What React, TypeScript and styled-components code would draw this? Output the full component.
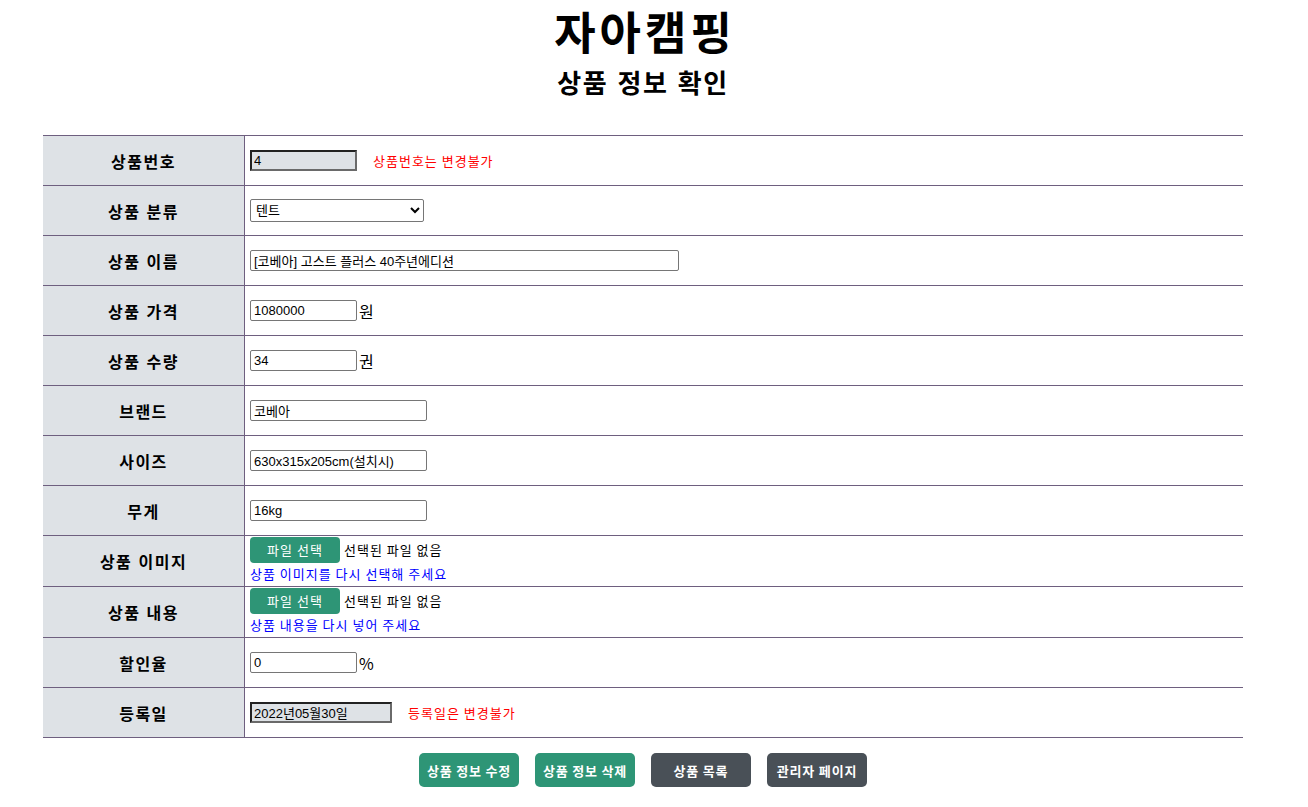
import React from "react";
import styled, { createGlobalStyle } from "styled-components";

const GlobalStyle = createGlobalStyle`
  html, body { margin: 0; padding: 0; background: #fff; }
  body { font-family: "Liberation Sans", "Noto Sans CJK KR", sans-serif; color: #000; }
`;

const Page = styled.div`
  width: 1286px;
  display: flex;
  flex-direction: column;
  align-items: center;
`;

const Title = styled.h1`
  margin: 0;
  font-size: 45px;
  font-weight: 700;
  line-height: 62px;
  height: 58px;
  letter-spacing: 4px;
  padding-left: 4px;
  font-family: "Noto Sans CJK KR", sans-serif;
`;

const SubTitle = styled.h2`
  margin: 4px 0 0;
  font-size: 26px;
  font-weight: 700;
  line-height: 40px;
  letter-spacing: 1.5px;
  word-spacing: 2px;
  font-family: "Noto Sans CJK KR", sans-serif;
`;

const Table = styled.table`
  margin-top: 33px;
  width: 1200px;
  border-collapse: collapse;
`;

const Row = styled.tr<{ $h?: number }>`
  height: ${(p) => p.$h ?? 50}px;
  border-top: 1px solid #6e5f7f;
  border-bottom: 1px solid #6e5f7f;
`;

const Th = styled.th`
  width: 201px;
  background: #dee2e6;
  border-right: 1px solid #6e5f7f;
  font-size: 16px;
  font-weight: 700;
  letter-spacing: 1.5px;
  word-spacing: 1px;
  text-align: center;
  padding: 0;
  font-family: "Noto Sans CJK KR", sans-serif;
`;

const Td = styled.td`
  padding: 0 5px;
  font-size: 13px;
  vertical-align: middle;
`;

const Line = styled.div`
  display: flex;
  align-items: center;
`;

const Input = styled.input<{ $w: number }>`
  width: ${(p) => p.$w}px;
  height: 21px;
  box-sizing: border-box;
  border: 1px solid #767676;
  border-radius: 2px;
  padding: 1px 3px;
  font-family: "Liberation Sans", "Noto Sans CJK KR", sans-serif;
  font-size: 13px;
  color: #000;
  background: #fff;
  outline: none;
`;

const ReadOnly = styled.input<{ $w: number }>`
  width: ${(p) => p.$w}px;
  height: 21px;
  box-sizing: border-box;
  border: 2px solid #6a6a6a;
  border-top-color: #222;
  border-left-color: #222;
  padding: 1px 2px;
  font-family: "Liberation Sans", "Noto Sans CJK KR", sans-serif;
  font-size: 13px;
  color: #000;
  background: #dee2e6;
  outline: none;
`;

const Select = styled.select`
  width: 174px;
  height: 23px;
  border: 1px solid #767676;
  border-radius: 2px;
  font-family: "Liberation Sans", "Noto Sans CJK KR", sans-serif;
  font-size: 13px;
  padding: 0 1px;
  background: #fff;
  color: #000;
`;

const Unit = styled.span`
  margin-left: 2px;
  font-size: 16px;
  font-family: "Noto Sans CJK KR", sans-serif;
`;

const Warn = styled.span`
  margin-left: 16px;
  color: #ff0000;
  font-size: 13px;
  letter-spacing: 1px;
  font-family: "Noto Sans CJK KR", sans-serif;
`;

const FileButton = styled.span`
  display: inline-flex;
  align-items: center;
  justify-content: center;
  width: 90px;
  height: 26px;
  border-radius: 4px;
  background: #2e9576;
  color: #fff;
  font-size: 13px;
  letter-spacing: 1px;
  font-family: "Noto Sans CJK KR", sans-serif;
`;

const FileText = styled.span`
  margin-left: 4px;
  font-size: 13px;
  letter-spacing: 1px;
  font-family: "Noto Sans CJK KR", sans-serif;
`;

const Hint = styled.div`
  color: #0000ff;
  font-size: 13px;
  line-height: 20px;
  margin-top: 1px;
  letter-spacing: 1px;
  font-family: "Noto Sans CJK KR", sans-serif;
`;

const FileCell = styled.div`
  display: flex;
  flex-direction: column;
  margin-top: -2px;
`;

const Buttons = styled.div`
  display: flex;
  gap: 16px;
  margin-top: 15px;
`;

const Btn = styled.button<{ $dark?: boolean }>`
  width: 100px;
  height: 34px;
  border: none;
  border-radius: 5px;
  background: ${(p) => (p.$dark ? "#495057" : "#2e9576")};
  color: #fff;
  font-size: 13px;
  font-weight: 700;
  letter-spacing: 0.8px;
  font-family: "Noto Sans CJK KR", sans-serif;
  padding: 0;
`;

const FileRow = ({ label, hint }: { label: string; hint: string }) => (
  <Row $h={51}>
    <Th>{label}</Th>
    <Td>
      <FileCell>
        <Line>
          <FileButton>파일 선택</FileButton>
          <FileText>선택된 파일 없음</FileText>
        </Line>
        <Hint>{hint}</Hint>
      </FileCell>
    </Td>
  </Row>
);

export default function App() {
  return (
    <Page>
      <GlobalStyle />
      <Title>자아캠핑</Title>
      <SubTitle>상품 정보 확인</SubTitle>
      <Table>
        <tbody>
          <Row>
            <Th>상품번호</Th>
            <Td>
              <Line>
                <ReadOnly $w={107} readOnly defaultValue="4" />
                <Warn>상품번호는 변경불가</Warn>
              </Line>
            </Td>
          </Row>
          <Row>
            <Th>상품 분류</Th>
            <Td>
              <Select defaultValue="텐트">
                <option>텐트</option>
              </Select>
            </Td>
          </Row>
          <Row>
            <Th>상품 이름</Th>
            <Td>
              <Input $w={429} defaultValue="[코베아] 고스트 플러스 40주년에디션" />
            </Td>
          </Row>
          <Row>
            <Th>상품 가격</Th>
            <Td>
              <Line>
                <Input $w={107} defaultValue="1080000" />
                <Unit>원</Unit>
              </Line>
            </Td>
          </Row>
          <Row>
            <Th>상품 수량</Th>
            <Td>
              <Line>
                <Input $w={107} defaultValue="34" />
                <Unit>권</Unit>
              </Line>
            </Td>
          </Row>
          <Row>
            <Th>브랜드</Th>
            <Td>
              <Input $w={177} defaultValue="코베아" />
            </Td>
          </Row>
          <Row>
            <Th>사이즈</Th>
            <Td>
              <Input $w={177} defaultValue="630x315x205cm(설치시)" />
            </Td>
          </Row>
          <Row>
            <Th>무게</Th>
            <Td>
              <Input $w={177} defaultValue="16kg" />
            </Td>
          </Row>
          <FileRow label="상품 이미지" hint="상품 이미지를 다시 선택해 주세요" />
          <FileRow label="상품 내용" hint="상품 내용을 다시 넣어 주세요" />
          <Row>
            <Th>할인율</Th>
            <Td>
              <Line>
                <Input $w={107} defaultValue="0" />
                <Unit>%</Unit>
              </Line>
            </Td>
          </Row>
          <Row>
            <Th>등록일</Th>
            <Td>
              <Line>
                <ReadOnly $w={142} readOnly defaultValue="2022년05월30일" />
                <Warn>등록일은 변경불가</Warn>
              </Line>
            </Td>
          </Row>
        </tbody>
      </Table>
      <Buttons>
        <Btn>상품 정보 수정</Btn>
        <Btn>상품 정보 삭제</Btn>
        <Btn $dark>상품 목록</Btn>
        <Btn $dark>관리자 페이지</Btn>
      </Buttons>
    </Page>
  );
}
